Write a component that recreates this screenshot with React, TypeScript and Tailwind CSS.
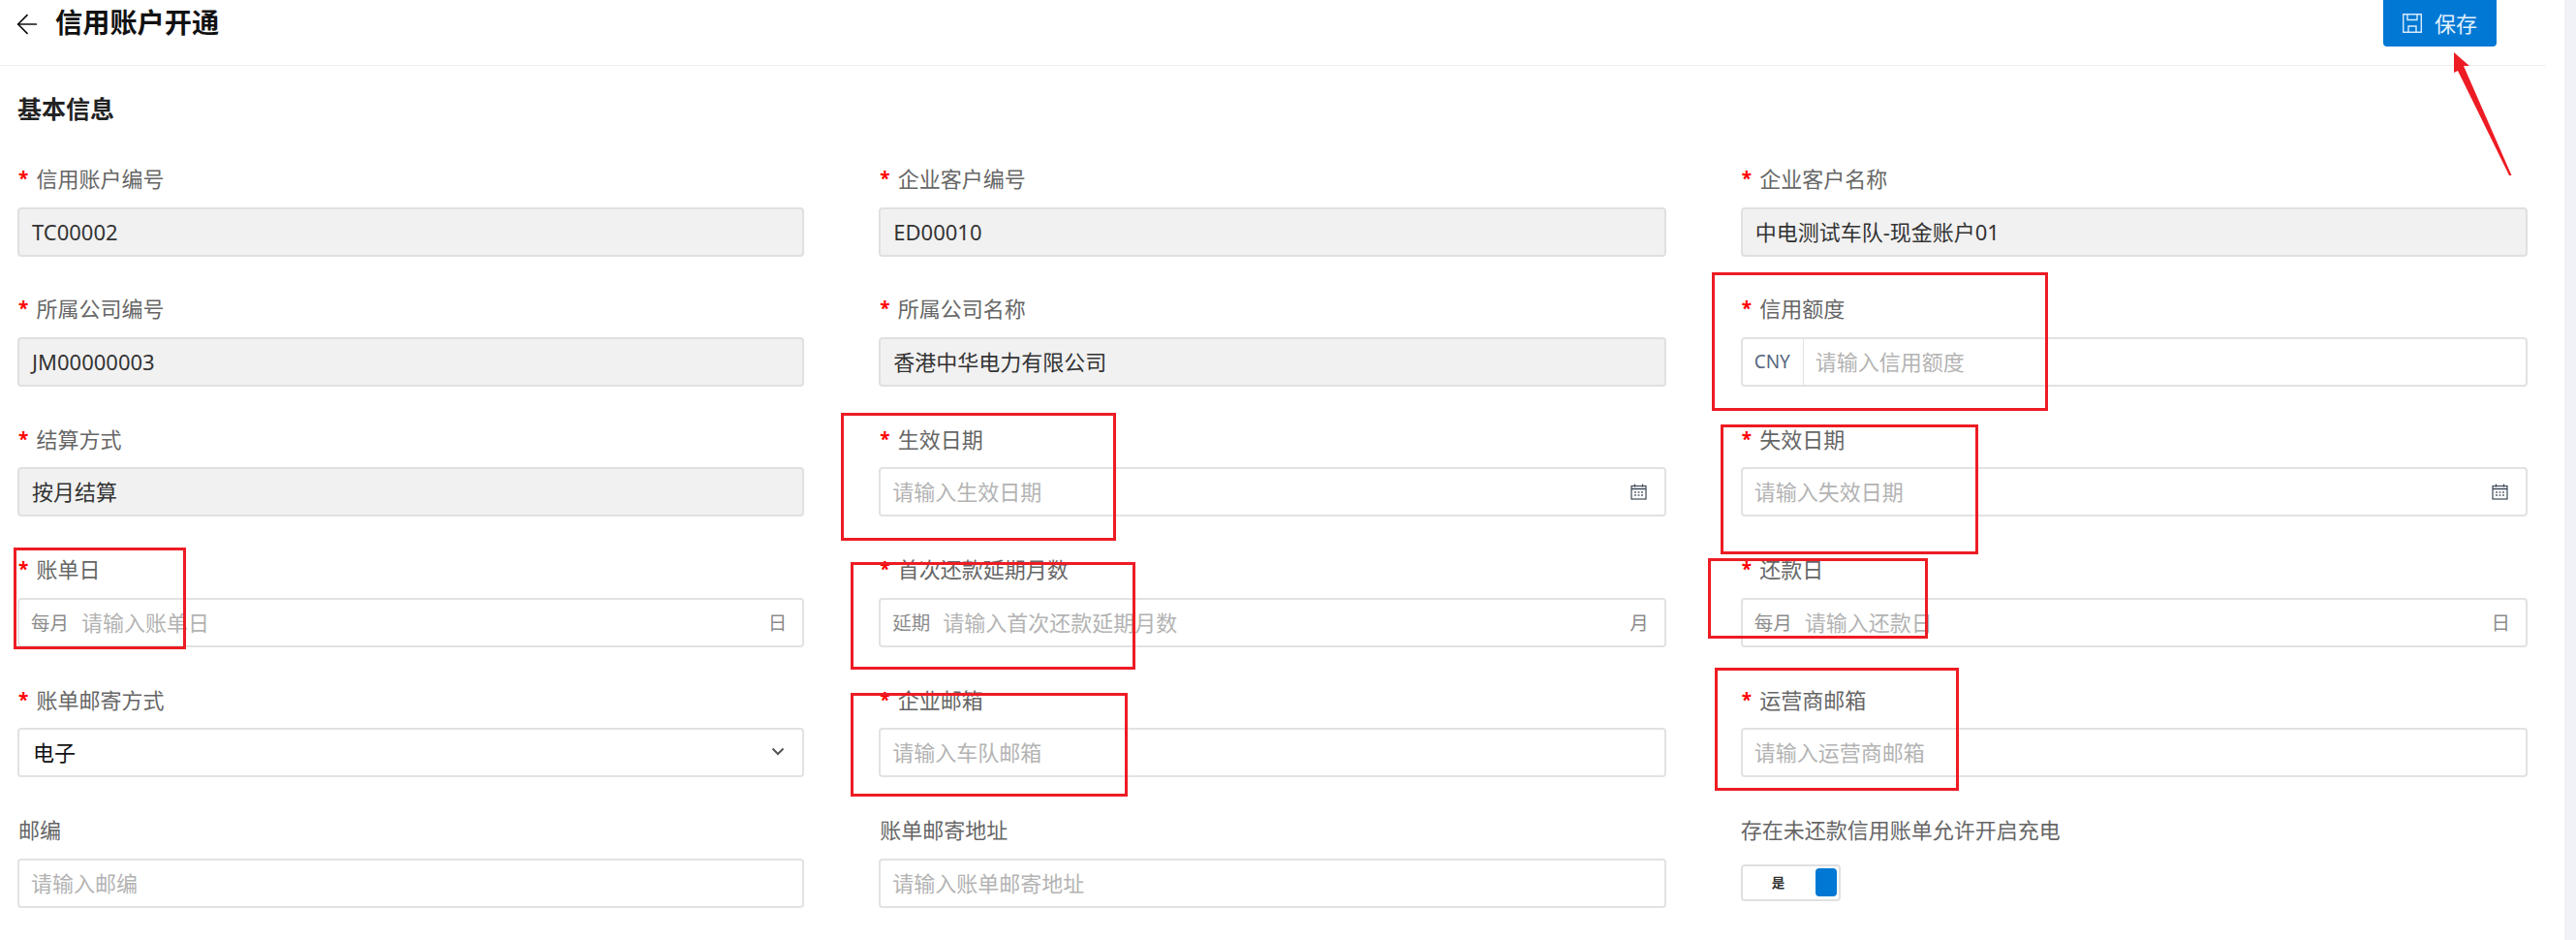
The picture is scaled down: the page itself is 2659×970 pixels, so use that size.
import { ArrowLeft } from "lucide-react";

type FieldProps = {
  label: string;
  required?: boolean;
  value?: string;
  placeholder?: string;
  prefix?: string;
  unit?: string;
  kind?: "disabled" | "input" | "date" | "select" | "currency";
};

const fields: FieldProps[] = [
  { label: "信用账户编号", required: true, kind: "disabled", value: "TC00002" },
  { label: "企业客户编号", required: true, kind: "disabled", value: "ED00010" },
  { label: "企业客户名称", required: true, kind: "disabled", value: "中电测试车队-现金账户01" },
  { label: "所属公司编号", required: true, kind: "disabled", value: "JM00000003" },
  { label: "所属公司名称", required: true, kind: "disabled", value: "香港中华电力有限公司" },
  { label: "信用额度", required: true, kind: "currency", placeholder: "请输入信用额度" },
  { label: "结算方式", required: true, kind: "disabled", value: "按月结算" },
  { label: "生效日期", required: true, kind: "date", placeholder: "请输入生效日期" },
  { label: "失效日期", required: true, kind: "date", placeholder: "请输入失效日期" },
  { label: "账单日", required: true, placeholder: "请输入账单日", prefix: "每月", unit: "日" },
  { label: "首次还款延期月数", required: true, placeholder: "请输入首次还款延期月数", prefix: "延期", unit: "月" },
  { label: "还款日", required: true, placeholder: "请输入还款日", prefix: "每月", unit: "日" },
  { label: "账单邮寄方式", required: true, kind: "select", value: "电子" },
  { label: "企业邮箱", required: true, placeholder: "请输入车队邮箱" },
  { label: "运营商邮箱", required: true, placeholder: "请输入运营商邮箱" },
  { label: "邮编", placeholder: "请输入邮编" },
  { label: "账单邮寄地址", placeholder: "请输入账单邮寄地址" },
];

const marks = [
  "left-[1767px] top-[281px] w-[347px] h-[143px]",
  "left-[1776px] top-[438px] w-[266px] h-[134px]",
  "left-[1763px] top-[576px] w-[227px] h-[83px]",
  "left-[1770px] top-[689px] w-[252px] h-[127px]",
  "left-[14px] top-[565px] w-[178px] h-[105px]",
  "left-[868px] top-[426px] w-[284px] h-[132px]",
  "left-[878px] top-[580px] w-[294px] h-[111px]",
  "left-[878px] top-[715px] w-[286px] h-[107px]",
];

function SaveIcon() {
  return (
    <svg width="20" height="20" viewBox="0 0 20 20" fill="none" stroke="#d8ecfb" strokeWidth="1.4">
      <path d="M.7.7h18.6v18.6H.7z" />
      <path d="M5 1v5.5h10V1" />
      <path d="M6 19v-6h8v6" />
    </svg>
  );
}

function CalendarIcon() {
  return (
    <svg width="17" height="17" viewBox="0 0 17 17" fill="none" className="shrink-0">
      <rect x="1" y="2.5" width="15" height="13.5" stroke="#3d4a58" strokeWidth="1.2" />
      <path d="M1 5.5h15" stroke="#3d4a58" strokeWidth="1.5" />
      <path d="M4.5 0.5v3M12.5 0.5v3" stroke="#3d4a58" strokeWidth="1.2" />
      <path d="M4 9h2M7.5 9h2M11 9h2M4 12h2M7.5 12h2M11 12h2" stroke="#5b6672" strokeWidth="1.3" />
    </svg>
  );
}

function Field({ label, required, value, placeholder, prefix, unit, kind = "input" }: FieldProps) {
  return (
    <div className="flex flex-col">
      <label className="flex h-[28px] items-center leading-[28px] text-[#666]">
        {required && (
          <span className="w-[19.5px] pl-[1px] text-[19px] font-bold text-[#f00]">*</span>
        )}
        {!required && <span className="w-[1px]" />}
        {label}
      </label>
      {kind === "disabled" ? (
        <div className="mt-[15.6px] flex h-[51px] items-center rounded border-2 border-[#e0e0e0] bg-[#f1f1f1] pl-[13px] text-[#333]">
          {value}
        </div>
      ) : (
        <div className="mt-[15.6px] flex h-[51px] items-center rounded border-2 border-[#e2e2e2] bg-white pl-[12px]">
          {kind === "currency" && (
            <span className="flex h-full w-[51px] shrink-0 items-center border-r border-[#e2e2e2] text-[19px] text-[#56667e]">
              CNY
            </span>
          )}
          {kind === "currency" && <span className="w-[12px] shrink-0" />}
          {prefix && (
            <span className="mr-[13px] shrink-0 text-[19.5px] text-[#8c8c8c]">{prefix}</span>
          )}
          {kind === "select" ? (
            <span className="flex-1 pl-[2px] text-[#111]">{value}</span>
          ) : (
            <span className="flex-1 text-[#b3b3b3]">{placeholder}</span>
          )}
          {unit && <span className="mr-[16px] text-[19.5px] text-[#8c8c8c]">{unit}</span>}
          {kind === "date" && (
            <span className="mr-[18px] flex">
              <CalendarIcon />
            </span>
          )}
          {kind === "select" && (
            <svg width="14" height="9" viewBox="0 0 14 9" fill="none" className="mr-[18px] mb-[3px]">
              <path d="M1.5 1.5 7 7l5.5-5.5" stroke="#555" strokeWidth="2" />
            </svg>
          )}
        </div>
      )}
    </div>
  );
}

export default function App() {
  return (
    <div className="relative flex h-[970px] w-full overflow-hidden bg-white font-['Noto_Sans','Noto_Sans_CJK_SC',sans-serif] text-[22px]">
      <div className="w-[2628px] shrink-0">
        <header className="flex h-[68px] items-start justify-between border-b border-[#eeeeee] pr-[51px] pl-[18px]">
          <div className="flex h-[46px] items-center">
            <ArrowLeft size={32} strokeWidth={1.3} className="mt-[4px] -ml-[6.5px] text-[#111]" />
            <h1 className="ml-[13.5px] text-[28.2px] font-bold text-[#111]">信用账户开通</h1>
          </div>
          <button className="flex h-[48px] w-[117px] items-center justify-center gap-[13px] rounded-b bg-[#0078d4] text-[22px] text-[#e3f1fc]">
            <SaveIcon />
            保存
          </button>
        </header>

        <section className="pr-[19px] pl-[18px]">
          <h2 className="mb-[12px] flex h-[90px] items-center text-[25px] font-bold text-[#222]">
            基本信息
          </h2>
          <div className="grid auto-rows-[134.4px] grid-cols-3 gap-x-[77px]">
            {fields.map((f) => (
              <Field key={f.label} {...f} />
            ))}
            <div className="flex flex-col">
              <label className="flex h-[28px] items-center leading-[28px] text-[#666]">
                存在未还款信用账单允许开启充电
              </label>
              <div className="mt-[22px] flex h-[38px] w-[103px] items-center justify-between rounded border-2 border-[#e0e0e0] bg-white pr-[2px] pl-[30px]">
                <span className="text-[13.5px] font-bold text-[#333]">是</span>
                <span className="h-[29px] w-[22px] rounded bg-[#0078d4]" />
              </div>
            </div>
          </div>
        </section>
      </div>

      <div className="ml-auto w-[12px] bg-[#f0f2f7]" />

      {marks.map((m) => (
        <div key={m} className={`pointer-events-none absolute border-[3px] border-[#ed1c24] ${m}`} />
      ))}

      <svg
        width="70"
        height="135"
        viewBox="0 0 70 135"
        className="pointer-events-none absolute left-[2530px] top-[52px]"
      >
        <polygon points="3,2 19,16 13,16 62.5,129 60,129 7,21 3,23" fill="#ed1c24" />
      </svg>
    </div>
  );
}
